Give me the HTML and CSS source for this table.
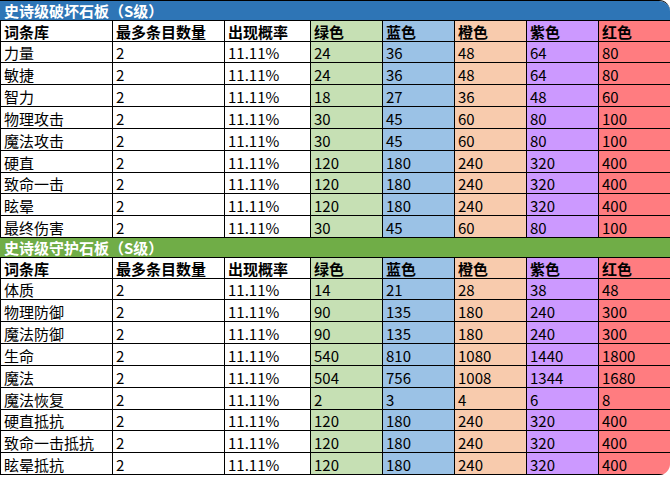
FILE: index.html
```html
<!DOCTYPE html>
<html lang="zh">
<head>
<meta charset="utf-8">
<link rel="stylesheet" href="styles.css">
</head>
<body>
<div class="sheet">
<div class="cell title blue-title">史诗级破坏石板（S级）</div>
<div class="cell head">词条库</div><div class="cell head">最多条目数量</div><div class="cell head">出现概率</div><div class="cell head g">绿色</div><div class="cell head b">蓝色</div><div class="cell head o">橙色</div><div class="cell head p">紫色</div><div class="cell head r">红色</div>
<div class="cell">力量</div><div class="cell">2</div><div class="cell">11.11%</div><div class="cell g">24</div><div class="cell b">36</div><div class="cell o">48</div><div class="cell p">64</div><div class="cell r">80</div>
<div class="cell">敏捷</div><div class="cell">2</div><div class="cell">11.11%</div><div class="cell g">24</div><div class="cell b">36</div><div class="cell o">48</div><div class="cell p">64</div><div class="cell r">80</div>
<div class="cell">智力</div><div class="cell">2</div><div class="cell">11.11%</div><div class="cell g">18</div><div class="cell b">27</div><div class="cell o">36</div><div class="cell p">48</div><div class="cell r">60</div>
<div class="cell">物理攻击</div><div class="cell">2</div><div class="cell">11.11%</div><div class="cell g">30</div><div class="cell b">45</div><div class="cell o">60</div><div class="cell p">80</div><div class="cell r">100</div>
<div class="cell">魔法攻击</div><div class="cell">2</div><div class="cell">11.11%</div><div class="cell g">30</div><div class="cell b">45</div><div class="cell o">60</div><div class="cell p">80</div><div class="cell r">100</div>
<div class="cell">硬直</div><div class="cell">2</div><div class="cell">11.11%</div><div class="cell g">120</div><div class="cell b">180</div><div class="cell o">240</div><div class="cell p">320</div><div class="cell r">400</div>
<div class="cell">致命一击</div><div class="cell">2</div><div class="cell">11.11%</div><div class="cell g">120</div><div class="cell b">180</div><div class="cell o">240</div><div class="cell p">320</div><div class="cell r">400</div>
<div class="cell">眩晕</div><div class="cell">2</div><div class="cell">11.11%</div><div class="cell g">120</div><div class="cell b">180</div><div class="cell o">240</div><div class="cell p">320</div><div class="cell r">400</div>
<div class="cell">最终伤害</div><div class="cell">2</div><div class="cell">11.11%</div><div class="cell g">30</div><div class="cell b">45</div><div class="cell o">60</div><div class="cell p">80</div><div class="cell r">100</div>
<div class="cell title green-title">史诗级守护石板（S级）</div>
<div class="cell head">词条库</div><div class="cell head">最多条目数量</div><div class="cell head">出现概率</div><div class="cell head g">绿色</div><div class="cell head b">蓝色</div><div class="cell head o">橙色</div><div class="cell head p">紫色</div><div class="cell head r">红色</div>
<div class="cell">体质</div><div class="cell">2</div><div class="cell">11.11%</div><div class="cell g">14</div><div class="cell b">21</div><div class="cell o">28</div><div class="cell p">38</div><div class="cell r">48</div>
<div class="cell">物理防御</div><div class="cell">2</div><div class="cell">11.11%</div><div class="cell g">90</div><div class="cell b">135</div><div class="cell o">180</div><div class="cell p">240</div><div class="cell r">300</div>
<div class="cell">魔法防御</div><div class="cell">2</div><div class="cell">11.11%</div><div class="cell g">90</div><div class="cell b">135</div><div class="cell o">180</div><div class="cell p">240</div><div class="cell r">300</div>
<div class="cell">生命</div><div class="cell">2</div><div class="cell">11.11%</div><div class="cell g">540</div><div class="cell b">810</div><div class="cell o">1080</div><div class="cell p">1440</div><div class="cell r">1800</div>
<div class="cell">魔法</div><div class="cell">2</div><div class="cell">11.11%</div><div class="cell g">504</div><div class="cell b">756</div><div class="cell o">1008</div><div class="cell p">1344</div><div class="cell r">1680</div>
<div class="cell">魔法恢复</div><div class="cell">2</div><div class="cell">11.11%</div><div class="cell g">2</div><div class="cell b">3</div><div class="cell o">4</div><div class="cell p">6</div><div class="cell r">8</div>
<div class="cell">硬直抵抗</div><div class="cell">2</div><div class="cell">11.11%</div><div class="cell g">120</div><div class="cell b">180</div><div class="cell o">240</div><div class="cell p">320</div><div class="cell r">400</div>
<div class="cell">致命一击抵抗</div><div class="cell">2</div><div class="cell">11.11%</div><div class="cell g">120</div><div class="cell b">180</div><div class="cell o">240</div><div class="cell p">320</div><div class="cell r">400</div>
<div class="cell">眩晕抵抗</div><div class="cell">2</div><div class="cell">11.11%</div><div class="cell g">120</div><div class="cell b">180</div><div class="cell o">240</div><div class="cell p">320</div><div class="cell r">400</div>
</div>
</body>
</html>
```

FILE: styles.css
```css
html, body {
  margin: 0;
  padding: 0;
  background: #ffffff;
}

.sheet {
  display: grid;
  grid-template-columns: 112px 112px 86px repeat(5, 72px);
  grid-template-rows: repeat(2, 20px 21px 21px 22px 22px 22px 22px 22px 21px 22px 22px);
  width: 670px;
  overflow: hidden;
  border-radius: 0 11px 11px 0;
  border-top: 1px solid #000;
  font-family: "Noto Sans CJK SC", "Noto Sans", sans-serif;
  font-size: 15px;
  color: #000;
}

.cell {
  box-sizing: border-box;
  display: flex;
  align-items: flex-end;
  border-left: 1px solid #000;
  border-bottom: 1px solid #000;
  padding: 0 0 0 3px;
  line-height: 18px;
  white-space: nowrap;
  overflow: hidden;
}

.title {
  grid-column: 1 / -1;
  border-left: none;
  padding-left: 4px;
  color: #ffffff;
  font-weight: bold;
}

.blue-title {
  background: #2e75b6;
}

.green-title {
  background: #70ad47;
}

.head {
  font-weight: bold;
}

.g { background: #c6e0b4; }
.b { background: #9bc2e6; }
.o { background: #f8cbad; }
.p { background: #cc99ff; }
.r { background: #ff7c80; }
```
